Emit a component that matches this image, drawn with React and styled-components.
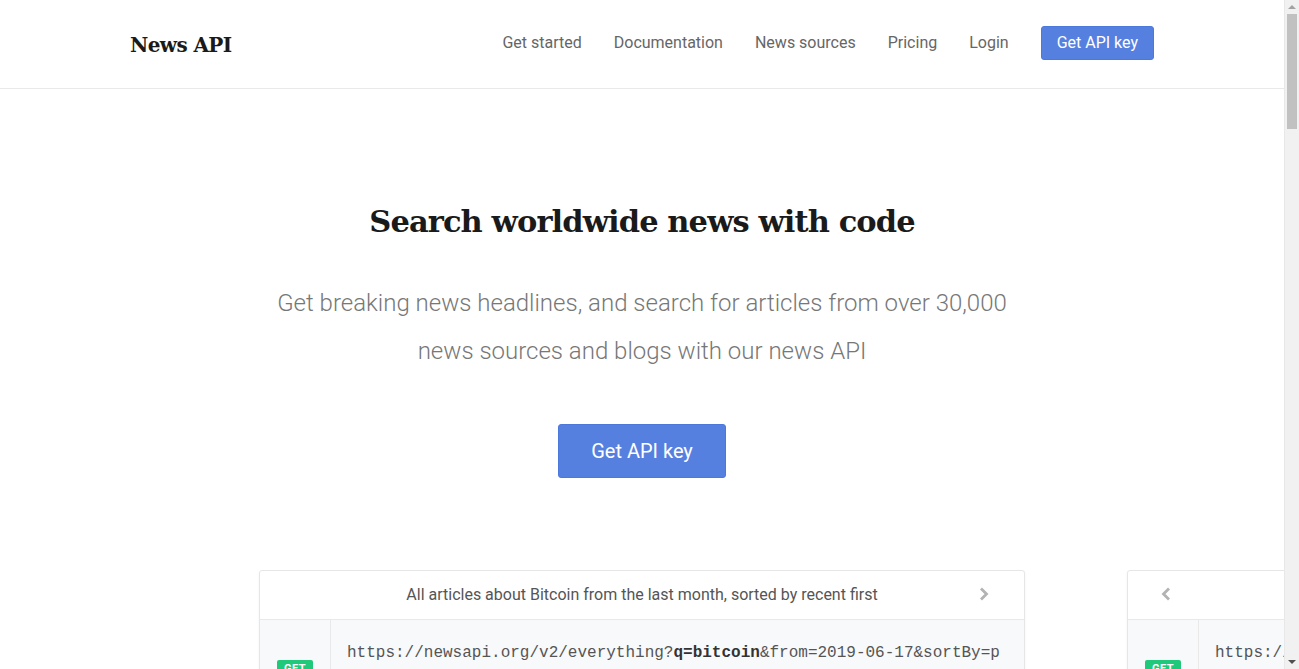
import React from 'react';
import styled, { createGlobalStyle } from 'styled-components';

const GlobalStyle = createGlobalStyle`
  body {
    margin: 0;
    background: #fff;
    font-family: Roboto, "Liberation Sans", sans-serif;
  }
`;

const Shell = styled.div`
  display: flex;
  align-items: flex-start;
`;

const Page = styled.div`
  flex: 1;
  min-width: 0;
`;

/* browser scrollbar as seen in the screenshot */
const ScrollTrack = styled.div`
  position: sticky;
  top: 0;
  flex: 0 0 15px;
  height: 100vh;
  background: #f1f1f1;
  display: flex;
  flex-direction: column;
  align-items: center;
  justify-content: space-between;
  border-left: 1px solid #e8e8e8;
  box-sizing: border-box;
`;

const ScrollArrow = styled.span`
  width: 0;
  height: 0;
  border-left: 4px solid transparent;
  border-right: 4px solid transparent;
  ${(p) => (p.$down ? 'border-top: 4px solid #505050;' : 'border-bottom: 4px solid #a3a3a3;')}
  margin: 5px 0;
`;

const ScrollThumb = styled.div`
  width: 10px;
  height: 115px;
  background: #c1c1c1;
`;

const ScrollRest = styled.div`
  flex: 1;
`;

const Header = styled.header`
  border-bottom: 1px solid #e9e9e9;
`;

const HeaderInner = styled.div`
  width: 1024px;
  height: 88px;
  margin: 0 auto;
  display: flex;
  align-items: center;
  justify-content: space-between;
`;

const Logo = styled.a`
  font-family: "DejaVu Serif", serif;
  font-weight: bold;
  font-size: 20px;
  letter-spacing: -0.6px;
  color: #1a1a1a;
  text-decoration: none;
  margin-top: 1px;
`;

const Nav = styled.nav`
  display: flex;
  align-items: center;
  gap: 32px;
  margin-bottom: 3px;
`;

const NavLink = styled.a`
  font-size: 16px;
  color: #666;
  text-decoration: none;
`;

const Button = styled.a`
  display: inline-flex;
  align-items: center;
  justify-content: center;
  background: #5680e0;
  color: #fff;
  text-decoration: none;
  border: 1px solid #4c78dc;
  border-radius: 3px;
  height: ${(p) => (p.$big ? '54px' : '34px')};
  padding: 0 ${(p) => (p.$big ? '32px' : '15px')};
  font-size: ${(p) => (p.$big ? '20px' : '16px')};
  box-sizing: border-box;
`;

const Hero = styled.section`
  display: flex;
  flex-direction: column;
  align-items: center;
  padding-top: 112px;
`;

const Title = styled.h1`
  margin: 0;
  font-family: "DejaVu Serif", serif;
  font-weight: bold;
  font-size: 30.5px;
  letter-spacing: -0.9px;
  color: #1a1a1a;
  line-height: 40px;
`;

const Lead = styled.p`
  margin: 38px 0 0;
  max-width: 760px;
  text-align: center;
  font-size: 24px;
  font-weight: 300;
  line-height: 48px;
  color: #777;
`;

const CtaWrap = styled.div`
  margin-top: 49px;
`;

const Carousel = styled.div`
  margin-top: 92px;
  overflow: hidden;
  padding-bottom: 3000px;
`;

const Track = styled.div`
  display: flex;
  gap: 102px;
  padding-left: calc(50% - 383px);
`;

const Card = styled.div`
  flex: 0 0 auto;
  width: 766px;
  min-width: 0;
  border: 1px solid #e6e6e6;
  border-radius: 3px;
  box-shadow: 0 1px 3px rgba(0, 0, 0, 0.05);
  background: #fff;
  box-sizing: border-box;
  overflow: hidden;
`;

const CardHead = styled.div`
  position: relative;
  height: 49px;
  display: flex;
  align-items: center;
  justify-content: center;
  border-bottom: 1px solid #e9e9e9;
  font-size: 16px;
  color: #555;
  padding-bottom: 2px;
  box-sizing: border-box;
`;

const Chevron = styled.span`
  position: absolute;
  top: 16px;
  ${(p) => (p.$left ? 'left: 32px;' : 'right: 34px;')}
  color: #b3b3b3;
  display: flex;
`;

const CardBody = styled.div`
  display: flex;
  background: #f8f9fb;
  height: 110px;
`;

const MethodCol = styled.div`
  flex: 0 0 71px;
  border-right: 1px solid #e9e9e9;
  display: flex;
  justify-content: center;
  padding-top: 40px;
  box-sizing: border-box;
`;

const Badge = styled.span`
  height: 18px;
  padding: 0 7px;
  border-radius: 2px;
  background: #20c97a;
  color: #fff;
  font-size: 11px;
  font-weight: bold;
  line-height: 18px;
  letter-spacing: 0.5px;
`;

const Code = styled.div`
  flex: 1;
  min-width: 0;
  padding: 24px 24px 24px 16px;
`;

const CodeLine = styled.div`
  font-family: "Liberation Mono", monospace;
  font-size: 16px;
  color: #555;
  white-space: nowrap;
  overflow: hidden;
  b {
    color: #333;
  }
`;

const ChevronIcon = ({ left }) => (
  <svg width="12" height="14" viewBox="0 0 12 14" fill="none">
    <path
      d={left ? 'M9 1.5 3.5 7 9 12.5' : 'M3 1.5 8.5 7 3 12.5'}
      stroke="currentColor"
      strokeWidth="2.8"
    />
  </svg>
);

const examples = [
  {
    title: 'All articles about Bitcoin from the last month, sorted by recent first',
    url: ['https://newsapi.org/v2/everything?', 'q=bitcoin', '&from=2019-06-17&sortBy=publishedAt'],
    next: true,
  },
  {
    title: 'Top business headlines in the US right now',
    url: ['https://newsapi.org/v2/top-headlines?', 'country=us', '&category=business'],
    prev: true,
  },
];

export default function App() {
  return (
    <>
      <GlobalStyle />
      <Shell>
        <Page>
          <Header>
            <HeaderInner>
              <Logo href="#">News API</Logo>
              <Nav>
                <NavLink href="#">Get started</NavLink>
                <NavLink href="#">Documentation</NavLink>
                <NavLink href="#">News sources</NavLink>
                <NavLink href="#">Pricing</NavLink>
                <NavLink href="#">Login</NavLink>
                <Button href="#">Get API key</Button>
              </Nav>
            </HeaderInner>
          </Header>
          <Hero>
            <Title>Search worldwide news with code</Title>
            <Lead>
              Get breaking news headlines, and search for articles from over 30,000 news sources
              and blogs with our news API
            </Lead>
            <CtaWrap>
              <Button $big href="#">Get API key</Button>
            </CtaWrap>
          </Hero>
          <Carousel>
            <Track>
              {examples.map((ex, i) => (
                <Card key={i}>
                  <CardHead>
                    {ex.prev && (
                      <Chevron $left>
                        <ChevronIcon left />
                      </Chevron>
                    )}
                    {ex.next && ex.title}
                    {ex.next && (
                      <Chevron>
                        <ChevronIcon />
                      </Chevron>
                    )}
                  </CardHead>
                  <CardBody>
                    <MethodCol>
                      <Badge>GET</Badge>
                    </MethodCol>
                    <Code>
                      <CodeLine>
                        {ex.url[0]}
                        <b>{ex.url[1]}</b>
                        {ex.url[2]}
                      </CodeLine>
                    </Code>
                  </CardBody>
                </Card>
              ))}
            </Track>
          </Carousel>
        </Page>
        <ScrollTrack>
          <ScrollArrow />
          <ScrollThumb />
          <ScrollRest />
          <ScrollArrow $down />
        </ScrollTrack>
      </Shell>
    </>
  );
}
